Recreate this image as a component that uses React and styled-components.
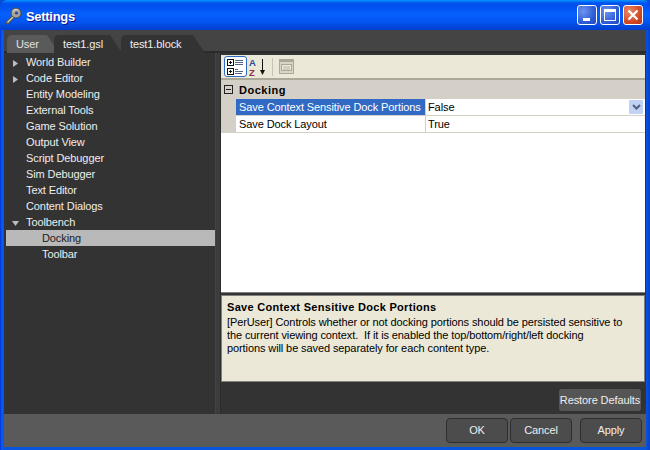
import React from "react";
import styled, { createGlobalStyle, css } from "styled-components";

const Global = createGlobalStyle`
  html, body { margin: 0; padding: 0; background: #0a4ad0; }
  body { font-family: "Liberation Sans", Arial, sans-serif; font-size: 11px; letter-spacing: -0.1px; }
`;

const Window = styled.div`
  width: 650px;
  height: 450px;
  box-sizing: border-box;
  display: flex;
  flex-direction: column;
  background: linear-gradient(90deg, #0831d9 0, #0a5cf0 2px, #0855dd 4px, #0855dd 646px, #0a3fc8 650px);
  border-radius: 7px 7px 0 0;
  overflow: hidden;
  padding: 0 4px 3px;
`;

const TitleBar = styled.div`
  height: 30px;
  flex: none;
  margin: 0 -4px;
  padding: 0 7px 1px 6px;
  box-sizing: border-box;
  display: flex;
  align-items: center;
  background: linear-gradient(180deg, #0997ff 0, #0053ee 3px, #0050ee 6px, #0660fe 14px, #0355f0 22px, #0046d8 27px, #003dd7 30px);
`;

const Title = styled.span`
  margin: 3px 0 0 4px;
  flex: 1;
  color: #fff;
  font: bold 13px "Liberation Sans", Arial, sans-serif;
  letter-spacing: -0.3px;
  text-shadow: 1px 1px 0 #0f1089;
`;

const Caption = styled.div`
  width: 20px;
  height: 20px;
  margin-left: 3px;
  box-sizing: border-box;
  border: 1px solid #fff;
  border-radius: 3px;
  display: flex;
  align-items: center;
  justify-content: center;
  background: ${(p) =>
    p.$close
      ? "radial-gradient(circle at 30% 30%, #e88a6c, #d34a24 60%, #b8321a)"
      : "radial-gradient(circle at 30% 30%, #6f95ee, #2f5ed8 60%, #2245c0)"};
`;

const Content = styled.div`
  flex: 1;
  min-height: 0;
  display: flex;
  flex-direction: column;
  background: #444;
`;

const TabStrip = styled.div`
  height: 23px;
  flex: none;
  padding: 5px 0 0 3px;
  box-sizing: border-box;
  display: flex;
  border-bottom: 2px solid #2b2b2b;
  background: #444;
`;

const Tab = styled.div`
  width: ${(p) => p.$w}px;
  margin-right: ${(p) => p.$gap}px;
  height: 18px;
  padding-left: ${(p) => p.$pad}px;
  box-sizing: border-box;
  line-height: 18px;
  color: ${(p) => (p.$active ? "#e2e2e2" : "#eee")};
  background: ${(p) => (p.$active ? "#5a5a5a" : "#333")};
  border-radius: 5px 0 0 0;
  clip-path: polygon(0 0, calc(100% - 12px) 0, 100% 100%, 0 100%);
`;

const Main = styled.div`
  flex: 1;
  min-height: 0;
  display: flex;
  background: #333;
`;

const Tree = styled.div`
  width: 210px;
  margin-left: 2px;
  flex: none;
  padding-top: 1px;
  box-sizing: border-box;
  background: #333;
  border-right: 1px solid #444;
`;

const TreeRow = styled.div`
  height: 16px;
  line-height: 16px;
  display: flex;
  align-items: center;
  padding-left: ${(p) => (p.$child ? 36 : 20)}px;
  position: relative;
  color: ${(p) => (p.$selected ? "#222" : "#eee")};
  background: ${(p) => (p.$selected ? "#b9b9b9" : "transparent")};
`;

const Arrow = styled.svg`
  position: absolute;
  left: 6px;
  top: 6px;
`;

const Splitter = styled.div`
  width: 5px;
  flex: none;
  background: #3c3c3c;
  border-right: 1px solid #2c2c2c;
  box-sizing: border-box;
`;

const Right = styled.div`
  flex: 1;
  min-width: 0;
  display: flex;
  flex-direction: column;
  margin-right: 1px;
`;

const Toolbar = styled.div`
  height: 25px;
  flex: none;
  display: flex;
  align-items: center;
  padding-left: 3px;
  box-sizing: border-box;
  background: #ebe8d8;
  border-bottom: 2px solid #aca899;
  margin-top: 2px;
`;

const ToolButton = styled.div`
  width: ${(p) => p.$w}px;
  height: 21px;
  box-sizing: border-box;
  display: flex;
  align-items: center;
  justify-content: center;
  ${(p) =>
    p.$on &&
    css`
      background: #fff;
      border: 1px solid #316ac5;
      border-radius: 3px;
    `}
`;

const ToolSep = styled.div`
  width: 1px;
  height: 18px;
  background: #c5c2b8;
  margin: 0 6px 0 6px;
`;

const Grid = styled.div`
  height: 213px;
  flex: none;
  box-sizing: border-box;
  background: #fff;
  border-bottom: 1px solid #808080;
`;

const Category = styled.div`
  height: 19px;
  display: flex;
  align-items: center;
  background: #d4d0c8;
  font-weight: bold;
  letter-spacing: 0.5px;
  color: #000;
  padding-left: 3px;
`;

const Expander = styled.div`
  width: 9px;
  height: 9px;
  box-sizing: border-box;
  border: 1px solid #222;
  background: #d4d0c8;
  margin-right: 6px;
  position: relative;
  &::after {
    content: "";
    position: absolute;
    left: 1px;
    top: 3px;
    width: 5px;
    height: 1px;
    background: #222;
  }
`;

const PropRow = styled.div`
  height: 17px;
  display: flex;
  box-sizing: border-box;
  border-bottom: 1px solid #d4d0c8;
  border-left: 15px solid #d4d0c8;
`;

const PropName = styled.div`
  width: 189px;
  flex: none;
  padding-left: 3px;
  box-sizing: border-box;
  line-height: 16px;
  white-space: nowrap;
  color: ${(p) => (p.$selected ? "#fff" : "#000")};
  background: ${(p) => (p.$selected ? "#316ac5" : "#fff")};
`;

const PropValue = styled.div`
  flex: 1;
  display: flex;
  align-items: center;
  justify-content: space-between;
  padding: 0 2px 0 2px;
  border-left: 1px solid #d4d0c8;
  line-height: 16px;
  color: #000;
`;

const DropButton = styled.div`
  width: 14px;
  height: 14px;
  display: flex;
  align-items: center;
  justify-content: center;
  background: #c1d2f3;
  border-radius: 1px;
`;

const Description = styled.div`
  height: 87px;
  flex: none;
  margin-top: 2px;
  padding: 4px 5px;
  box-sizing: border-box;
  background: #ebe8d8;
  border: 1px solid #808080;
  color: #000;
  line-height: 13px;
  white-space: nowrap;
`;

const DescTitle = styled.div`
  font-weight: bold;
  letter-spacing: 0.3px;
  line-height: 15px;
  margin-bottom: 1px;
`;

const RestoreRow = styled.div`
  flex: 1;
  display: flex;
  justify-content: flex-end;
  align-items: center;
  padding: 3px 4px 0 0;
  background: #333;
`;

const RestoreButton = styled.div`
  width: 82px;
  height: 22px;
  line-height: 22px;
  text-align: center;
  white-space: nowrap;
  color: #eee;
  background: #555;
  border-radius: 3px;
`;

const Footer = styled.div`
  height: 33px;
  flex: none;
  display: flex;
  align-items: center;
  justify-content: flex-end;
  padding-right: 4px;
  background: #5a5a5a;
`;

const FooterButton = styled.div`
  width: 62px;
  height: 25px;
  box-sizing: border-box;
  margin-left: ${(p) => p.$gap}px;
  line-height: 23px;
  text-align: center;
  color: #eee;
  background: #4c4c4c;
  border: 1px solid #2e2e2e;
  border-radius: 4px;
`;

const KeySvg = styled.svg`
  margin-top: 2px;
  flex: none;
`;

const KeyIcon = () => (
  <KeySvg width="16" height="18" viewBox="0 0 16 18">
    <path d="M1.5 15.5 L8 9" stroke="#55554e" strokeWidth="3.6" strokeLinecap="round" />
    <path d="M1.5 15.5 L8 9" stroke="#d8d6ca" strokeWidth="1.2" />
    <circle cx="10" cy="6" r="5" fill="#a9a79c" stroke="#4c4c46" />
    <path d="M7 4.5a3.5 3.5 0 0 1 5-1.5" fill="none" stroke="#e4e2d8" />
    <circle cx="10.5" cy="6" r="1.6" fill="#2644ae" />
  </KeySvg>
);

const CategoryIcon = () => (
  <svg width="19" height="19" viewBox="0 0 19 19">
    <rect x="1.5" y="2.5" width="6" height="6" fill="#fff" stroke="#111" />
    <path d="M3 5.5h3M4.5 4v3" stroke="#111" />
    <rect x="1.5" y="11.5" width="6" height="6" fill="#fff" stroke="#111" />
    <path d="M3 14.5h3M4.5 13v3" stroke="#111" />
    <path d="M9 3.5h8M9 5.5h8M9 7.5h8M9 12.5h3M9 14.5h8M9 16.5h7" stroke="#56658c" />
  </svg>
);

const SortIcon = () => (
  <svg width="16" height="20" viewBox="0 0 16 20">
    <text x="0" y="8.5" fontFamily="Liberation Sans, sans-serif" fontSize="9.5" fontWeight="bold" fill="#2a4a9a">A</text>
    <text x="0" y="19" fontFamily="Liberation Sans, sans-serif" fontSize="9.5" fontWeight="bold" fill="#8c3040">Z</text>
    <path d="M13.5 2v13" stroke="#111" />
    <path d="M11 13h5l-2.5 5z" fill="#111" />
  </svg>
);

const PagesIcon = () => (
  <svg width="15" height="15" viewBox="0 0 15 15">
    <rect x="0.5" y="0.5" width="14" height="14" fill="#d8d5c8" stroke="#aca899" />
    <rect x="0" y="0" width="15" height="3" fill="#aca899" />
    <rect x="2.5" y="5.5" width="10" height="6" fill="#ebe8d8" stroke="#aca899" />
    <path d="M4 8h7M4 10h7" stroke="#b8b5aa" />
  </svg>
);

const treeItems = [
  { label: "World Builder", arrow: "right" },
  { label: "Code Editor", arrow: "right" },
  { label: "Entity Modeling" },
  { label: "External Tools" },
  { label: "Game Solution" },
  { label: "Output View" },
  { label: "Script Debugger" },
  { label: "Sim Debugger" },
  { label: "Text Editor" },
  { label: "Content Dialogs" },
  { label: "Toolbench", arrow: "down" },
  { label: "Docking", child: true, selected: true },
  { label: "Toolbar", child: true },
];

const App = () => (
  <>
    <Global />
    <Window>
      <TitleBar>
        <KeyIcon />
        <Title>Settings</Title>
        <Caption>
          <svg width="10" height="14" viewBox="0 0 10 14">
            <rect x="1" y="10" width="7" height="3" fill="#fff" />
          </svg>
        </Caption>
        <Caption>
          <svg width="12" height="12" viewBox="0 0 12 12">
            <rect x="0.5" y="0.5" width="11" height="11" fill="none" stroke="#fff" />
            <rect x="0" y="0" width="12" height="3" fill="#fff" />
          </svg>
        </Caption>
        <Caption $close>
          <svg width="12" height="12" viewBox="0 0 12 12">
            <path d="M1.5 1.5l9 9M10.5 1.5l-9 9" stroke="#fff" strokeWidth="2.2" />
          </svg>
        </Caption>
      </TitleBar>
      <Content>
        <TabStrip>
          <Tab $active $w={52} $gap={-5} $pad={9}>User</Tab>
          <Tab $w={68} $gap={-1} $pad={9}>test1.gsl</Tab>
          <Tab $w={84} $gap={0} $pad={9}>test1.block</Tab>
        </TabStrip>
        <Main>
          <Tree>
            {treeItems.map((item) => (
              <TreeRow key={item.label} $child={item.child} $selected={item.selected}>
                {item.arrow === "right" && (
                  <Arrow width="7" height="7" viewBox="0 0 7 7">
                    <path d="M1 0l5 3.5L1 7z" fill="#bdbdbd" />
                  </Arrow>
                )}
                {item.arrow === "down" && (
                  <Arrow width="7" height="7" viewBox="0 0 7 7">
                    <path d="M0 1h7L3.5 6z" fill="#bdbdbd" />
                  </Arrow>
                )}
                {item.label}
              </TreeRow>
            ))}
          </Tree>
          <Splitter />
          <Right>
            <Toolbar>
              <ToolButton $on $w={23}><CategoryIcon /></ToolButton>
              <ToolButton $w={19}><SortIcon /></ToolButton>
              <ToolSep />
              <ToolButton $w={15}><PagesIcon /></ToolButton>
            </Toolbar>
            <Grid>
              <Category>
                <Expander />
                Docking
              </Category>
              <PropRow>
                <PropName $selected>Save Context Sensitive Dock Portions</PropName>
                <PropValue>
                  False
                  <DropButton>
                    <svg width="9" height="6" viewBox="0 0 9 6">
                      <path d="M1 1l3.5 3.5L8 1" fill="none" stroke="#4d6185" strokeWidth="2" />
                    </svg>
                  </DropButton>
                </PropValue>
              </PropRow>
              <PropRow>
                <PropName>Save Dock Layout</PropName>
                <PropValue>True</PropValue>
              </PropRow>
            </Grid>
            <Description>
              <DescTitle>Save Context Sensitive Dock Portions</DescTitle>
              [PerUser] Controls whether or not docking portions should be persisted sensitive to
              <br />
              the current viewing context.&nbsp; If it is enabled the top/bottom/right/left docking
              <br />
              portions will be saved separately for each content type.
            </Description>
            <RestoreRow>
              <RestoreButton>Restore Defaults</RestoreButton>
            </RestoreRow>
          </Right>
        </Main>
        <Footer>
          <FooterButton $gap={0}>OK</FooterButton>
          <FooterButton $gap={2}>Cancel</FooterButton>
          <FooterButton $gap={8}>Apply</FooterButton>
        </Footer>
      </Content>
    </Window>
  </>
);

export default App;
